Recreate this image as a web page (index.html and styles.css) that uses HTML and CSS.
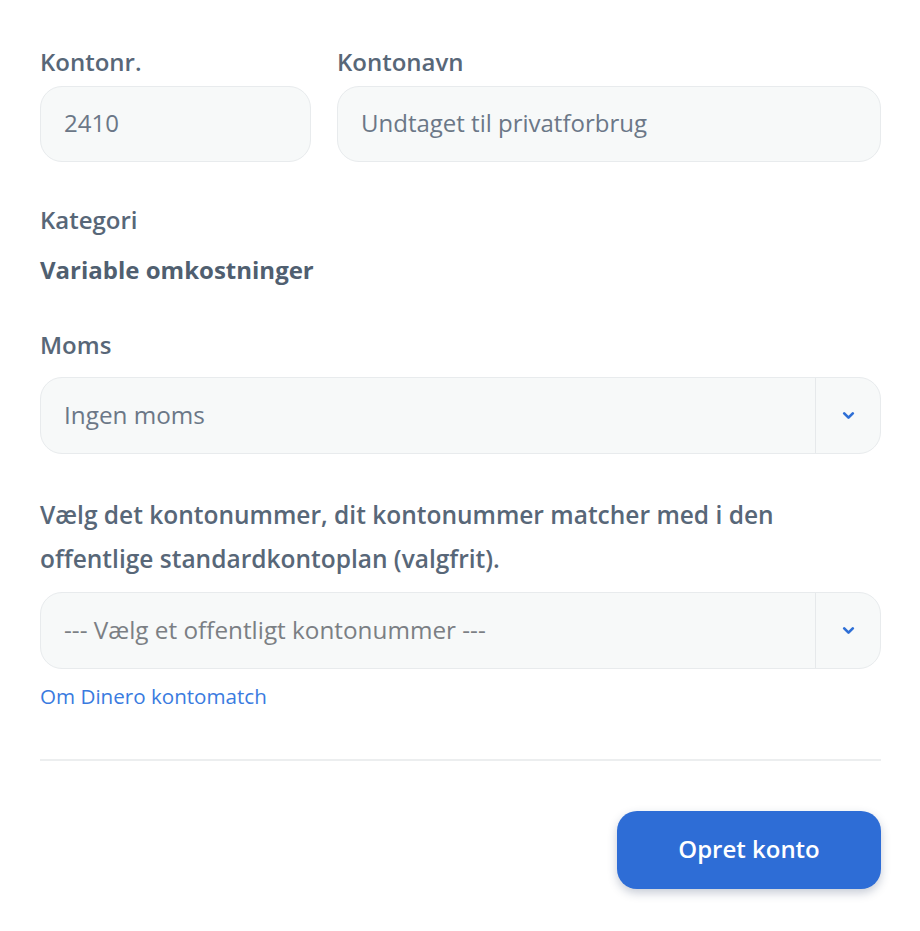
FILE: index.html
```html
<!DOCTYPE html>
<html lang="da">
<head>
<meta charset="utf-8">
<title>Opret konto</title>
<link rel="stylesheet" href="styles.css">
</head>
<body>
<div class="form">
  <div class="row">
    <div class="field field-nr">
      <div class="label">Kontonr.</div>
      <div class="input">2410</div>
    </div>
    <div class="field field-name">
      <div class="label">Kontonavn</div>
      <div class="input">Undtaget til privatforbrug</div>
    </div>
  </div>

  <div class="label label-kat">Kategori</div>
  <div class="value">Variable omkostninger</div>

  <div class="label label-moms">Moms</div>
  <div class="select">
    <div class="select-text">Ingen moms</div>
    <div class="select-btn">
      <svg width="13" height="9" viewBox="0 0 13 9"><path d="M2.2 2.4l4.3 4.2 4.3-4.2" fill="none" stroke="#2e6fd6" stroke-width="2.7" stroke-linecap="round" stroke-linejoin="round"/></svg>
    </div>
  </div>

  <p class="desc">Vælg det kontonummer, dit kontonummer matcher med i den offentlige standardkontoplan (valgfrit).</p>
  <div class="select select-2">
    <div class="select-text placeholder">--- Vælg et offentligt kontonummer ---</div>
    <div class="select-btn">
      <svg width="13" height="9" viewBox="0 0 13 9"><path d="M2.2 2.4l4.3 4.2 4.3-4.2" fill="none" stroke="#2e6fd6" stroke-width="2.7" stroke-linecap="round" stroke-linejoin="round"/></svg>
    </div>
  </div>
  <a class="link" href="#">Om Dinero kontomatch</a>

  <div class="divider"></div>

  <div class="actions">
    <button class="btn">Opret konto</button>
  </div>
</div>
</body>
</html>
```

FILE: styles.css
```css
html, body {
  margin: 0;
  padding: 0;
  background: #ffffff;
}
body {
  font-family: "Open Sans", "Noto Sans", sans-serif;
  color: #5a6878;
}
.form {
  padding: 47px 39px 40px 40px;
  display: flex;
  flex-direction: column;
}
.row {
  display: flex;
  gap: 26px;
}
.field-nr { width: 271px; flex: none; }
.field-name { flex: 1; }
.label {
  font-size: 24px;
  font-weight: 600;
  line-height: 30px;
  color: #586778;
}
.field .label { margin-bottom: 9px; }
.input {
  height: 76px;
  box-sizing: border-box;
  border: 1.5px solid #e8ebed;
  background: #f7f9f9;
  border-radius: 22px;
  padding: 0 23px 3px;
  display: flex;
  align-items: center;
  font-size: 24px;
  color: #6b7787;
}
.label-kat { margin-top: 43px; }
.value {
  margin-top: 20px;
  font-size: 24px;
  font-weight: 700;
  line-height: 30px;
  color: #505f70;
}
.label-moms { margin-top: 45px; }
.select {
  margin-top: 17px;
  height: 77px;
  box-sizing: border-box;
  border: 1.5px solid #e8ebed;
  background: #f7f9f9;
  border-radius: 22px;
  display: flex;
  align-items: stretch;
}
.select-text {
  flex: 1;
  display: flex;
  align-items: center;
  padding: 0 23px 3px;
  font-size: 24.3px;
  color: #6b7787;
}
.select-text.placeholder { color: #7b7f84; }
.select-btn {
  width: 64px;
  border-left: 1.5px solid #e6e9eb;
  display: flex;
  align-items: center;
  justify-content: center;
}
.desc {
  margin: 39px 0 0;
  font-size: 24.5px;
  font-weight: 600;
  line-height: 44px;
  color: #586778;
}
.select-2 { margin-top: 11px; }
.link {
  margin-top: 14px;
  font-size: 20.6px;
  line-height: 26px;
  color: #3a7be0;
  text-decoration: none;
  align-self: flex-start;
}
.divider {
  margin-top: 50px;
  height: 2px;
  background: #eceeef;
}
.actions {
  margin-top: 50px;
  display: flex;
  justify-content: flex-end;
}
.btn {
  width: 264px;
  height: 78px;
  border: none;
  border-radius: 20px;
  background: #2e6dd6;
  color: #ffffff;
  font-family: "Open Sans", "Noto Sans", sans-serif;
  font-size: 24px;
  font-weight: 600;
  padding-bottom: 4px;
  box-shadow: 0 4px 10px rgba(30, 50, 90, 0.25);
}
```
